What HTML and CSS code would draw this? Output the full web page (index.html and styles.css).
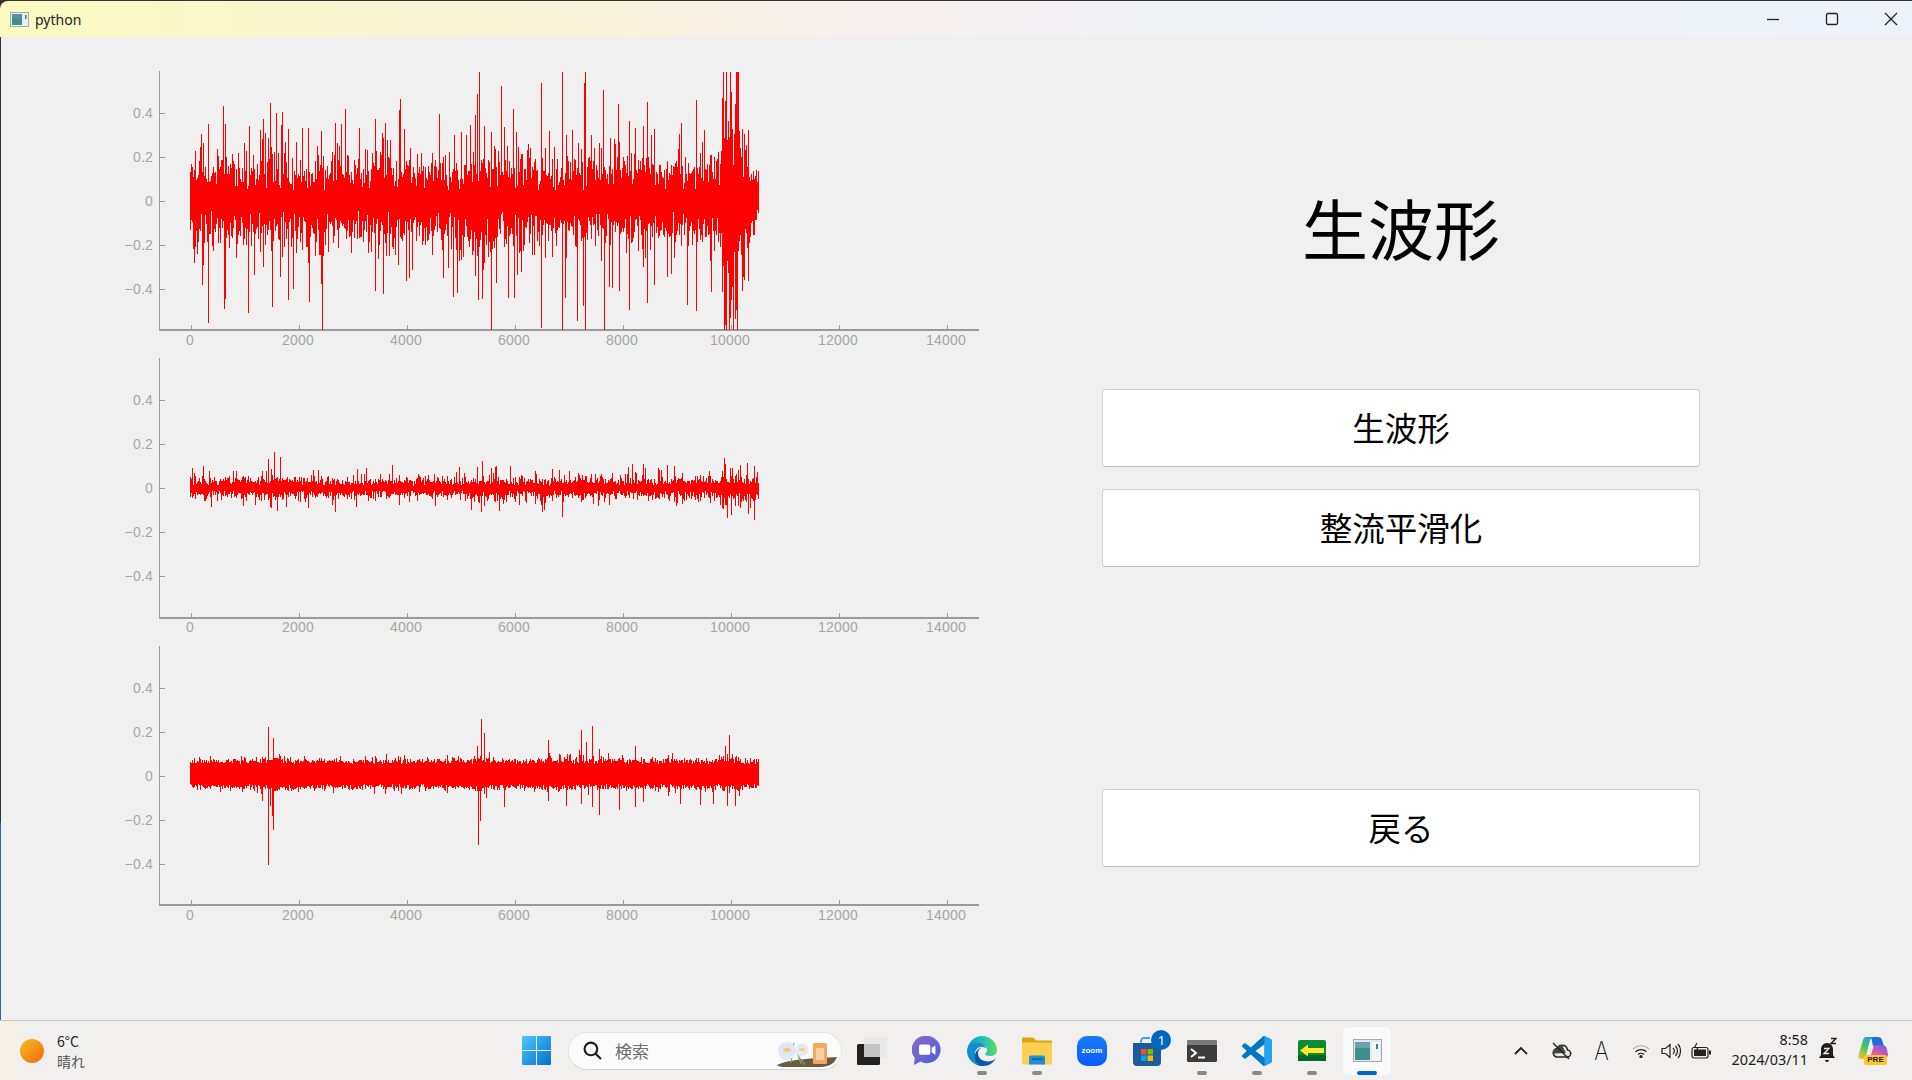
FILE: index.html
```html
<!DOCTYPE html>
<html lang="ja">
<head>
    <meta charset="UTF-8">
    <meta name="viewport" content="width=device-width, initial-scale=1.0">
    <title>python</title>
    <link rel="stylesheet" href="styles.css">
</head>
<body>
    <header class="titlebar">
        <div class="app-name">
            <svg class="app-icon" viewBox="0 0 19 15">
                <rect x="0.5" y="0.5" width="18" height="14" fill="#e8eef0" stroke="#a9a9a9"/>
                <rect x="2" y="2" width="10" height="11" fill="#3f8f8c"/>
                <rect x="2" y="2" width="10" height="4" fill="#5a8fa8"/>
                <rect x="15" y="3" width="1.5" height="4" fill="#3f7f9c"/>
            </svg>
            <span>python</span>
        </div>
        <div class="win-controls">
            <svg viewBox="0 0 14 14"><path d="M1 7.5h12"/></svg>
            <svg viewBox="0 0 14 14"><rect x="1.5" y="1.5" width="11" height="11" rx="1.5"/></svg>
            <svg viewBox="0 0 14 14"><path d="M1 1l12 12M13 1L1 13"/></svg>
        </div>
    </header>

    <main class="content">
        <section class="plots">
            <svg class="chart" id="chart1"></svg>
            <svg class="chart" id="chart2"></svg>
            <svg class="chart" id="chart3"></svg>
        </section>
        <section class="side">
            <h1 class="side-title">生波形</h1>
            <button class="btn">生波形</button>
            <button class="btn">整流平滑化</button>
            <button class="btn btn-back">戻る</button>
        </section>
    </main>

    <footer class="taskbar">
        <div class="weather">
            <span class="sun"></span>
            <div class="weather-text">
                <span class="temp">6°C</span>
                <span class="sky">晴れ</span>
            </div>
        </div>

        <div class="task-center">
            <svg class="win-logo" viewBox="0 0 29 29">
                <defs>
                    <linearGradient id="winBlue" x1="0" y1="0" x2="1" y2="1">
                        <stop offset="0" stop-color="#4fc8fb"/>
                        <stop offset="1" stop-color="#0070cf"/>
                    </linearGradient>
                </defs>
                <path fill="url(#winBlue)" d="M1 0h13v14H0V1a1 1 0 0 1 1-1zM15 0h13a1 1 0 0 1 1 1v13H15zM0 15h14v14H1a1 1 0 0 1-1-1zM15 15h14v13a1 1 0 0 1-1 1H15z"/>
            </svg>

            <div class="search">
                <svg class="search-icon" viewBox="0 0 18 18"><circle cx="7.5" cy="7.5" r="6" /><path d="M12 12l5 5"/></svg>
                <span class="search-text">検索</span>
                <svg class="search-art" viewBox="0 0 60 28">
                    <path d="M0 25C12 19 40 18 60 17 57 25 50 27 42 27H10C5 27 2 27 0 25z" fill="#6d5a42"/>
                    <path d="M14 23l3-20M24 24l-4-12M28 25l-6-8" stroke="#7da56b" stroke-width="1.2" fill="none"/>
                    <circle cx="10" cy="11" r="9" fill="#e3e4f7"/>
                    <circle cx="25" cy="10" r="6.5" fill="#e6e7f6"/>
                    <ellipse cx="10" cy="10" rx="4" ry="2" fill="#f0d060"/>
                    <ellipse cx="25" cy="9.5" rx="3" ry="1.5" fill="#f0d060"/>
                    <rect x="36" y="3" width="14" height="21" rx="1.5" fill="#f5a860"/>
                    <rect x="39" y="8" width="8" height="12" fill="#fcd0a0"/>
                </svg>
            </div>

            <div class="task">
                <svg class="task-icon" viewBox="0 0 30 28">
                    <rect x="0" y="7" width="23" height="21" rx="1.5" fill="#222"/>
                    <rect x="7" y="0" width="23" height="20" rx="1.5" fill="#e8e8e8" fill-opacity="0.85"/>
                    <rect x="7" y="7" width="16" height="13" fill="#c4c4c4"/>
                </svg>
            </div>
            <div class="task">
                <svg class="task-icon" viewBox="0 0 30 32">
                    <defs>
                        <linearGradient id="chatGrad" x1="0" y1="0" x2="1" y2="1">
                            <stop offset="0" stop-color="#8a68c8"/>
                            <stop offset="1" stop-color="#4a62d8"/>
                        </linearGradient>
                    </defs>
                    <path fill="url(#chatGrad)" d="M15 0a14.5 14.5 0 1 1-7 27.2L1 31l1-7.5A14.5 14.5 0 0 1 15 0z"/>
                    <rect x="6.5" y="9" width="12" height="11" rx="2" fill="#fff"/>
                    <path fill="#fff" d="M20 12.5l4-2.5v10l-4-2.5z"/>
                </svg>
            </div>
            <div class="task has-dot">
                <svg class="task-icon" viewBox="0 0 30 30">
                    <defs>
                        <linearGradient id="edgeTop" x1="0" y1="0.5" x2="1" y2="0.5">
                            <stop offset="0" stop-color="#0f8fd8"/>
                            <stop offset="0.55" stop-color="#27c0b8"/>
                            <stop offset="1" stop-color="#5fdc5f"/>
                        </linearGradient>
                    </defs>
                    <path fill="url(#edgeTop)" d="M15 0c8.5 0 15 6.5 15 14 0 4-3 6-7 6-3 0-5-1-5-2 1-1 2-2 2-4 0-3-3-6-8-6C6 8 1 12 0 16 0 7 7 0 15 0z"/>
                    <path fill="#0f8fd0" d="M0 15c1-5 6-8 11-8 4 0 7 2 8 5-5-3-11 0-11 6 0 5 4 10 10 11.5-1 .3-2 .5-3 .5C7 30 0 23 0 15z"/>
                    <path fill="#0b58a8" d="M19 12c-4-1.5-8 1-8 5.5 0 5 5 8 10 8 3 0 6-1 8-4-2 5-7 8.5-13 8.5-1 0-1.5 0-2-.1-5-2-7-7-6-11 1-5 6-9 11-6.9z"/>
                </svg>
            </div>
            <div class="task has-dot">
                <svg class="task-icon" viewBox="0 0 30 27">
                    <path fill="#dda40e" d="M1 0h10l3 3h15a1 1 0 0 1 1 1v6H0V1a1 1 0 0 1 1-1z"/>
                    <path fill="#fbcf52" d="M0 5h29a1 1 0 0 1 1 1v20a1 1 0 0 1-1 1H1a1 1 0 0 1-1-1z"/>
                    <path fill="#1c8fd8" d="M7 20a2 2 0 0 1 2-2h12a2 2 0 0 1 2 2v7H7z"/>
                    <rect x="10" y="21" width="10" height="1.5" fill="#0d5a98"/>
                </svg>
            </div>
            <div class="task">
                <div class="zoom-icon">zoom</div>
            </div>
            <div class="task">
                <svg class="task-icon store-icon" viewBox="0 0 30 30">
                    <path fill="none" stroke="#3aa0e8" stroke-width="1.8" d="M9 8V5a3 3 0 0 1 3-3h6"/>
                    <path fill="#1c5c9c" d="M1 7h28v19a4 4 0 0 1-4 4H5a4 4 0 0 1-4-4z"/>
                    <rect x="9" y="13" width="5.5" height="5.5" fill="#f25022"/>
                    <rect x="15.5" y="13" width="5.5" height="5.5" fill="#7fba00"/>
                    <rect x="9" y="19.5" width="5.5" height="5.5" fill="#00a4ef"/>
                    <rect x="15.5" y="19.5" width="5.5" height="5.5" fill="#ffb900"/>
                </svg>
                <span class="badge">1</span>
            </div>
            <div class="task has-dot">
                <svg class="task-icon term-icon" viewBox="0 0 30 22">
                    <rect width="30" height="22" rx="1.5" fill="#3c3c3c"/>
                    <path d="M1.5 0h27A1.5 1.5 0 0 1 30 1.5V5H0V1.5A1.5 1.5 0 0 1 1.5 0z" fill="#7a7a7a"/>
                    <path d="M4 9l5 4-5 4" stroke="#fff" stroke-width="2" fill="none"/>
                    <path d="M11 17.5h7" stroke="#fff" stroke-width="2"/>
                </svg>
            </div>
            <div class="task has-dot">
                <svg class="task-icon" viewBox="0 0 100 100">
                    <path fill="#0078c8" d="M96.5 10.8 75.9.9a6.2 6.2 0 0 0-7.1 1.2L29.4 38 12.2 25a4.2 4.2 0 0 0-5.3.2L1.4 30.2a4.2 4.2 0 0 0 0 6.2L16.3 50 1.4 63.6a4.2 4.2 0 0 0 0 6.2l5.5 5a4.2 4.2 0 0 0 5.3.2l17.2-13 39.4 35.9a6.2 6.2 0 0 0 7.1 1.2l20.6-9.9a6.2 6.2 0 0 0 3.5-5.6V16.4a6.2 6.2 0 0 0-3.5-5.6zM75 72.7 45.1 50 75 27.3z"/>
                    <path fill="#24a4f0" d="M71 1a6 6 0 0 1 5 0l20.5 9.8a6.2 6.2 0 0 1 3.5 5.6v66.8a6.2 6.2 0 0 1-3.5 5.6L76 99a6 6 0 0 1-5 0c2.5 1 4-.5 4-3V4c0-2.5-1.5-4-4-3z"/>
                </svg>
            </div>
            <div class="task has-dot">
                <svg class="task-icon green-icon" viewBox="0 0 28 21">
                    <rect width="28" height="21" rx="2" fill="#0c8a34"/>
                    <rect y="15" width="28" height="6" fill="#06662a"/>
                    <path d="M2 10.5l8-6V8h16v5H10v3.5z" fill="#f8ea2c"/>
                </svg>
            </div>
            <div class="task task-active">
                <svg class="task-icon app-big" viewBox="0 0 29 23">
                    <rect x="0.5" y="0.5" width="28" height="22" fill="#e4eaec" stroke="#a8a8a8"/>
                    <rect x="2" y="3" width="15" height="18" fill="#3f8f8c"/>
                    <rect x="2" y="3" width="15" height="6" fill="#6aa0b0"/>
                    <rect x="19" y="3" width="8" height="18" fill="#f4f6f6"/>
                    <rect x="23" y="5" width="2" height="5" fill="#3f7f9c"/>
                </svg>
            </div>
        </div>

        <div class="tray">
            <svg class="tray-icon chevron" viewBox="0 0 14 8"><path d="M1 7l6-6 6 6"/></svg>
            <svg class="tray-icon cloud" viewBox="0 0 22 18">
                <path d="M6 15h11a3.5 3.5 0 0 0 .5-7A5.5 5.5 0 0 0 7 6.5 4.5 4.5 0 0 0 6 15z" fill="#e8e8e8" stroke-width="1.5"/>
                <path d="M2.5 11.5A4.5 4.5 0 0 1 7 6.5 5.5 5.5 0 0 1 12 3l4 8z" fill="#444" stroke="none"/>
                <path d="M3 1l16 16" stroke-width="1.5"/>
            </svg>
            <span class="ime">A</span>
            <svg class="tray-icon wifi" viewBox="0 0 18 14"><path d="M1 5a11.5 11.5 0 0 1 16 0" stroke="#b0b0b0"/><path d="M3.5 7.8a8 8 0 0 1 11 0M6 10.5a4.3 4.3 0 0 1 6 0"/><circle cx="9" cy="12.7" r="1" fill="#222"/></svg>
            <svg class="tray-icon speaker" viewBox="0 0 20 16"><path d="M1 5.5h3.5L9 1.5v13l-4.5-4H1z"/><path d="M12 5a4.5 4.5 0 0 1 0 6M14.5 3a7.5 7.5 0 0 1 0 10M17 1a11 11 0 0 1 0 14"/></svg>
            <svg class="tray-icon battery" viewBox="0 0 20 16">
                <rect x="1" y="4.5" width="16" height="10.5" rx="2"/>
                <rect x="3" y="6.5" width="12" height="6.5" fill="#222" stroke="none"/>
                <rect x="18" y="7.5" width="2" height="4" fill="#222" stroke="none"/>
                <path d="M6 0L3.5 4.5H7L5 8.5" stroke-width="1.2"/>
            </svg>
            <div class="clock">
                <span>8:58</span>
                <span>2024/03/11</span>
            </div>
            <svg class="tray-icon bell" viewBox="0 0 18 27">
                <path d="M8 6a6 6 0 0 0-6 6v6l-2 3h16l-2-3v-6a6 6 0 0 0-6-6zM6 23a2 2 0 0 0 4 0z" fill="#1c1c1c" stroke="none"/>
                <path d="M5 11.5h5l-5 5h5" stroke="#f0f0f0" stroke-width="1.3"/>
                <path d="M12 1.5h5l-5 5h5" stroke-width="1.5"/>
            </svg>
            <div class="copilot">
                <svg viewBox="0 0 30 28">
                    <defs>
                        <linearGradient id="copA" x1="0.7" y1="0" x2="0.2" y2="1">
                            <stop offset="0" stop-color="#20a0e0"/>
                            <stop offset="0.5" stop-color="#4cc860"/>
                            <stop offset="1" stop-color="#f0c030"/>
                        </linearGradient>
                        <linearGradient id="copB" x1="0.8" y1="0" x2="0.2" y2="1">
                            <stop offset="0" stop-color="#7060e0"/>
                            <stop offset="0.6" stop-color="#d858b8"/>
                            <stop offset="1" stop-color="#f07090"/>
                        </linearGradient>
                    </defs>
                    <path fill="#1c70d8" d="M13 0h7c2 0 3.5 1 4 3l2 6H15z"/>
                    <path fill="url(#copA)" d="M8 0h8c-2 0-3 1-4 3L8 19c-.5 2-2 3-4 3H3c-2 0-3-2-2.5-4L5 3c.5-2 1.5-3 3-3z"/>
                    <path fill="url(#copB)" d="M16 8h8c2 0 4 1 4.5 3l1.5 6c.5 2-1 4-3 4H12z"/>
                </svg>
                <span class="pre">PRE</span>
            </div>
        </div>
    </footer>

    <script src="script.js"></script>
</body>
</html>
```

FILE: styles.css
```css
* {
    box-sizing: border-box;
}

html, body {
    height: 100%;
}

body {
    margin: 0;
    display: flex;
    flex-direction: column;
    height: 1080px;
    overflow: hidden;
    font-family: "Noto Sans", "Noto Sans CJK JP", sans-serif;
    background-color: #333;
    color: #000;
}

/* title bar */
.titlebar {
    flex: 0 0 36px;
    display: flex;
    align-items: center;
    justify-content: space-between;
    margin-top: 1px;
    padding: 0 14px 0 10px;
    border-top-left-radius: 8px;
    background: linear-gradient(90deg, #fbfac0 0%, #f9f4d6 26%, #f8f0f0 46%, #f1f2f6 60%, #eef3fb 100%);
}

.app-name {
    display: flex;
    align-items: center;
    gap: 6px;
    font-size: 14px;
    color: #222;
}

.app-icon {
    width: 19px;
    height: 15px;
}

.win-controls {
    display: flex;
    gap: 45px;
}

.win-controls svg {
    width: 14px;
    height: 14px;
    fill: none;
    stroke: #222;
    stroke-width: 1.3;
}

/* main window area */
.content {
    flex: 1;
    display: flex;
    background: linear-gradient(#333 0 80%, #2a6aa8 80%) left top / 1px 100% no-repeat, #f0f0f0;
}

.plots {
    display: flex;
    flex-direction: column;
    width: 980px;
    padding-top: 34px;
}

.chart {
    display: block;
    width: 980px;
    height: 288px;
    overflow: visible;
}

.chart:first-child {
    height: 287px;
}

.axis {
    stroke: #9a9a9a;
    stroke-width: 1;
    fill: none;
    shape-rendering: crispEdges;
}

.axis-main {
    stroke-width: 2;
}

.tick-label {
    font-family: "Liberation Sans", Arial, sans-serif;
    font-size: 14px;
    letter-spacing: 0.2px;
    fill: #a6a6a6;
}

.wave {
    stroke: #ff0000;
    stroke-width: 1;
    fill: none;
    shape-rendering: crispEdges;
}

.side {
    display: flex;
    flex-direction: column;
    width: 598px;
    margin-left: 122px;
    padding-top: 144px;
}

.side-title {
    margin: 0 0 118px;
    height: 90px;
    line-height: 90px;
    font-size: 66px;
    font-weight: 400;
    text-align: center;
    font-family: "Noto Sans CJK JP", sans-serif;
}

.btn {
    height: 78px;
    margin-bottom: 22px;
    padding: 0 0 4px;
    border: 1px solid #d0d0d0;
    border-bottom-color: #bcbcbc;
    border-radius: 4px;
    background-color: #fff;
    font-family: "Noto Sans CJK JP", sans-serif;
    font-size: 32.5px;
    color: #000;
}

.btn-back {
    margin-top: 200px;
}

/* taskbar */
.taskbar {
    flex: 0 0 60px;
    display: grid;
    grid-template-columns: 522px 873px 1fr;
    align-items: center;
    border-top: 1px solid #c8c8c8;
    background: linear-gradient(90deg, #f8efe4 0, #f1f0ee 30px), #f1f0ee;
}

.weather {
    display: flex;
    align-items: center;
    gap: 13px;
    padding-left: 20px;
}

.sun {
    width: 24px;
    height: 24px;
    border-radius: 50%;
    background: linear-gradient(135deg, #f3bd20, #f4690a);
}

.weather-text {
    display: flex;
    flex-direction: column;
    font-size: 14px;
    line-height: 20px;
    font-family: "Noto Sans CJK JP", sans-serif;
}

.temp {
    color: #222;
}

.sky {
    color: #555;
}

.task-center {
    display: flex;
    align-items: center;
}

.win-logo {
    width: 29px;
    height: 29px;
    margin-right: 17px;
}

.search {
    display: flex;
    align-items: center;
    width: 274px;
    height: 38px;
    margin-right: 3px;
    padding: 0 4px 0 14px;
    border: 1px solid #e4e4e4;
    border-bottom-color: #d4d4d4;
    border-radius: 19px;
    background-color: #fbfbfb;
}

.search-icon {
    width: 19px;
    height: 19px;
    fill: none;
    stroke: #1c1c1c;
    stroke-width: 2;
}

.search-text {
    flex: 1;
    margin-left: 13px;
    font-size: 17px;
    color: #6e6e6e;
    font-family: "Noto Sans CJK JP", sans-serif;
}

.search-art {
    width: 60px;
    height: 28px;
    margin-top: 6px;
}

.task {
    position: relative;
    display: flex;
    align-items: center;
    justify-content: center;
    width: 55px;
    height: 48px;
}

.task-icon {
    width: 30px;
    height: 30px;
}

.term-icon {
    height: 22px;
}

.green-icon {
    width: 28px;
    height: 21px;
}

.app-big {
    width: 29px;
    height: 23px;
}

.has-dot::after,
.task-active::after {
    content: "";
    position: absolute;
    left: 50%;
    bottom: 0;
    width: 10px;
    height: 4px;
    margin-left: -5px;
    border-radius: 2px;
    background-color: #8a8a8a;
}

.task-active {
    width: 48px;
    margin: 0 4px;
    border-radius: 5px;
    background-color: #fafafa;
    box-shadow: 0 0 1px #ddd;
}

.task-active::after {
    width: 20px;
    margin-left: -10px;
    background-color: #0067c0;
}

.zoom-icon {
    width: 30px;
    height: 30px;
    border-radius: 10px;
    background: linear-gradient(#1a78f8, #0b5cff);
    color: #fff;
    font-family: "Liberation Sans", Arial, sans-serif;
    font-size: 8px;
    font-weight: 700;
    line-height: 30px;
    text-align: center;
}

.badge {
    position: absolute;
    top: 3px;
    left: 32px;
    width: 20px;
    height: 20px;
    border-radius: 50%;
    background-color: #0067c0;
    color: #fff;
    font-size: 13px;
    line-height: 20px;
    text-align: center;
}

.tray {
    display: flex;
    align-items: center;
    padding-left: 119px;
}

.tray-icon {
    fill: none;
    stroke: #222;
    stroke-width: 1.2;
}

.chevron {
    width: 14px;
    height: 8px;
    margin-right: 22px;
    stroke-width: 1.8;
}

.cloud {
    width: 22px;
    height: 18px;
    margin-right: 21px;
}

.ime {
    width: 17px;
    margin-right: 22px;
    font-family: "Inter", "Liberation Sans", sans-serif;
    font-size: 26px;
    font-weight: 200;
    line-height: 26px;
    color: #111;
    text-align: center;
    transform: scaleX(0.85);
}

.wifi {
    width: 18px;
    height: 14px;
    margin-right: 11px;
}

.speaker {
    width: 20px;
    height: 16px;
    margin-right: 10px;
}

.battery {
    width: 20px;
    height: 16px;
    margin-right: 21px;
}

.clock {
    display: flex;
    flex-direction: column;
    align-items: flex-end;
    width: 76px;
    padding-bottom: 2px;
    font-size: 14.4px;
    line-height: 20px;
    color: #1c1c1c;
    white-space: nowrap;
}

.bell {
    width: 18px;
    height: 27px;
    margin-left: 11px;
}

.copilot {
    position: relative;
    width: 30px;
    height: 28px;
    margin-left: 21px;
}

.copilot svg {
    display: block;
    width: 30px;
    height: 28px;
}

.pre {
    position: absolute;
    left: 6px;
    bottom: 0;
    width: 23px;
    height: 10px;
    border-radius: 2px;
    background-color: #fbc62c;
    color: #222;
    font-family: "Liberation Sans", Arial, sans-serif;
    font-size: 8px;
    font-weight: 700;
    line-height: 10px;
    text-align: center;
}
```

FILE: script.js
```js
// Draws the three waveform plots. Columns are one pixel wide, the way a
// dense line plot ends up on screen.
const NS = 'http://www.w3.org/2000/svg';

const X_ZERO = 190.5;
const X_STEP = 54;          // px per 1000 samples
const X_END = 758;
const Y_UNIT = 220;         // px per 1.0
const AXIS_X = 160;
const AXIS_RIGHT = 979;

// bursts: [from px, to px, tail factor, core factor]
// spikes: [px, height in px from the zero line]
const charts = [
    {
        id: 'chart1', zero: 129.5, bottom: 259, labelY: 274, seed: 11,
        core: 20, spread: 1.1, tail: 15, shift: 0,
        bursts: [[722, 739, 2, 3], [739, 750, 1.4, 1.5], [750, 759, 0.5, 0.9], [260, 272, 1.3, 1.2], [470, 500, 1.2, 1.2]],
        spikes: [[270, 98], [208, 77], [225, 77], [249, 75], [288, 72], [308, 73], [321, 70], [335, 78], [341, 77],
            [359, 73], [375, 82], [382, 68], [390, 61], [475, 86], [479, 129], [484, 75], [454, 66], [466, 66],
            [491, 69], [262, 62], [268, 63], [501, 115], [513, 92], [541, 118], [562, 129], [585, 129], [584, 118],
            [603, 111], [618, 97], [629, 80], [635, 73], [643, 75], [647, 99], [654, 72], [681, 78], [696, 101],
            [704, 71], [722, 88], [723, 129], [726, 129], [730, 129], [736, 129], [737, 129], [738, 129], [744, 67],
            [748, 48], [208, -122], [225, -98], [248, -112], [272, -106], [288, -99], [293, -88], [309, -101],
            [322, -129], [383, -93], [453, -96], [457, -92], [482, -98], [491, -129], [202, -84], [194, -62],
            [195, -46], [508, -97], [514, -97], [541, -127], [562, -129], [565, -97], [577, -120], [583, -105],
            [585, -129], [604, -129], [612, -87], [619, -90], [629, -109], [647, -102], [654, -84], [667, -76],
            [696, -110], [724, -129], [726, -129], [729, -129], [733, -129], [737, -129],
            [742, -90], [748, -80]]
    },
    {
        id: 'chart2', zero: 130, bottom: 260, labelY: 274, seed: 23,
        core: 4.5, spread: 1, tail: 3.5, shift: 0,
        bursts: [[260, 285, 1.5, 1.3], [470, 505, 1.4, 1.2], [640, 720, 1.2, 1.1], [720, 758, 1.5, 1.4]],
        spikes: [[268, 29], [274, 36], [280, 31], [357, 19], [482, 27], [496, 21], [510, 22], [725, 24], [732, 20],
            [747, 25], [754, 22], [271, -20], [277, -23], [356, -19], [481, -24], [499, -23], [542, -24], [562, -29],
            [727, -30], [731, -27], [748, -24], [754, -32]]
    },
    {
        id: 'chart3', zero: 130, bottom: 259, labelY: 274, seed: 37,
        core: 12, spread: 0.4, tail: 1.6, shift: 2,
        bursts: [[260, 282, 1.5, 1.1], [475, 490, 1.5, 1.1], [545, 610, 1.8, 1], [720, 740, 2, 1.1]],
        spikes: [[268, 49], [273, 38], [481, 57], [484, 43], [548, 36], [581, 46], [592, 50], [586, 34], [599, 27],
            [635, 30], [729, 41], [725, 30], [477, 30], [268, -89], [273, -54], [478, -69], [480, -45], [504, -31],
            [548, -25], [566, -30], [581, -28], [592, -31], [599, -39], [619, -34], [635, -31], [643, -26], [680, -28],
            [700, -29], [713, -28], [727, -30], [735, -30], [270, -30], [272, -40]]
    }
];

// small seeded generator so the noise is the same on every load
function makeRandom(seed) {
    let s = seed >>> 0;
    return function () {
        s = (s + 0x6D2B79F5) >>> 0;
        let t = s;
        t = Math.imul(t ^ (t >>> 15), t | 1);
        t ^= t + Math.imul(t ^ (t >>> 7), t | 61);
        return ((t ^ (t >>> 14)) >>> 0) / 4294967296;
    };
}

function add(svg, tag, attrs, text) {
    const el = document.createElementNS(NS, tag);
    for (const key in attrs) {
        el.setAttribute(key, attrs[key]);
    }
    if (text !== undefined) {
        el.textContent = text;
    }
    svg.appendChild(el);
    return el;
}

function drawAxes(svg, chart) {
    const bottom = chart.bottom;

    add(svg, 'path', { class: 'axis', d: `M${AXIS_X - 0.5} 0V${bottom}` });
    add(svg, 'path', { class: 'axis axis-main', d: `M${AXIS_X - 1} ${bottom}H${AXIS_RIGHT}` });

    [0.4, 0.2, 0, -0.2, -0.4].forEach((v) => {
        const y = Math.round(chart.zero - v * Y_UNIT) + 0.5;
        add(svg, 'path', { class: 'axis', d: `M${AXIS_X} ${y}h5` });
        const label = v === 0 ? '0' : (v < 0 ? '\u2212' : '') + Math.abs(v).toFixed(1);
        add(svg, 'text', { class: 'tick-label', x: 153, y: y + 4.5, 'text-anchor': 'end' }, label);
    });

    for (let i = 0; i <= 14; i += 2) {
        const x = Math.round(X_ZERO + i * X_STEP) + 0.5;
        add(svg, 'path', { class: 'axis', d: `M${x} ${bottom}v-5` });
        add(svg, 'text', { class: 'tick-label', x: x - 1.5, y: chart.labelY, 'text-anchor': 'middle' }, String(i * 1000));
    }
}

function drawWave(svg, chart) {
    const rand = makeRandom(chart.seed);
    const limit = chart.zero;
    const low = chart.bottom - chart.zero;
    const extraUp = {};
    const extraDown = {};

    chart.spikes.forEach(([x, h]) => {
        if (h > 0) {
            extraUp[x] = h;
        } else {
            extraDown[x] = -h;
        }
    });

    function amplitude(k, c) {
        const base = chart.core * c * (1 - chart.spread / 2 + chart.spread * rand());
        return base + k * chart.tail * -Math.log(rand() + 0.001) * 0.9;
    }

    let d = '';
    for (let x = 190; x <= X_END; x++) {
        let k = 1;
        let c = 1;
        chart.bursts.forEach(([a, b, tailK, coreK]) => {
            if (x >= a && x < b) {
                k = tailK;
                c = coreK;
            }
        });
        let up = amplitude(k, c) + chart.shift;
        let down = amplitude(k, c) - chart.shift;
        up = Math.min(Math.max(up, extraUp[x] || 0), limit);
        down = Math.min(Math.max(down, extraDown[x] || 0), low);
        d += `M${x + 0.5} ${(chart.zero - up).toFixed(0)}V${(chart.zero + down).toFixed(0)}`;
    }
    add(svg, 'path', { class: 'wave', d: d });
}

charts.forEach((chart) => {
    const svg = document.getElementById(chart.id);
    drawAxes(svg, chart);
    drawWave(svg, chart);
});
```
